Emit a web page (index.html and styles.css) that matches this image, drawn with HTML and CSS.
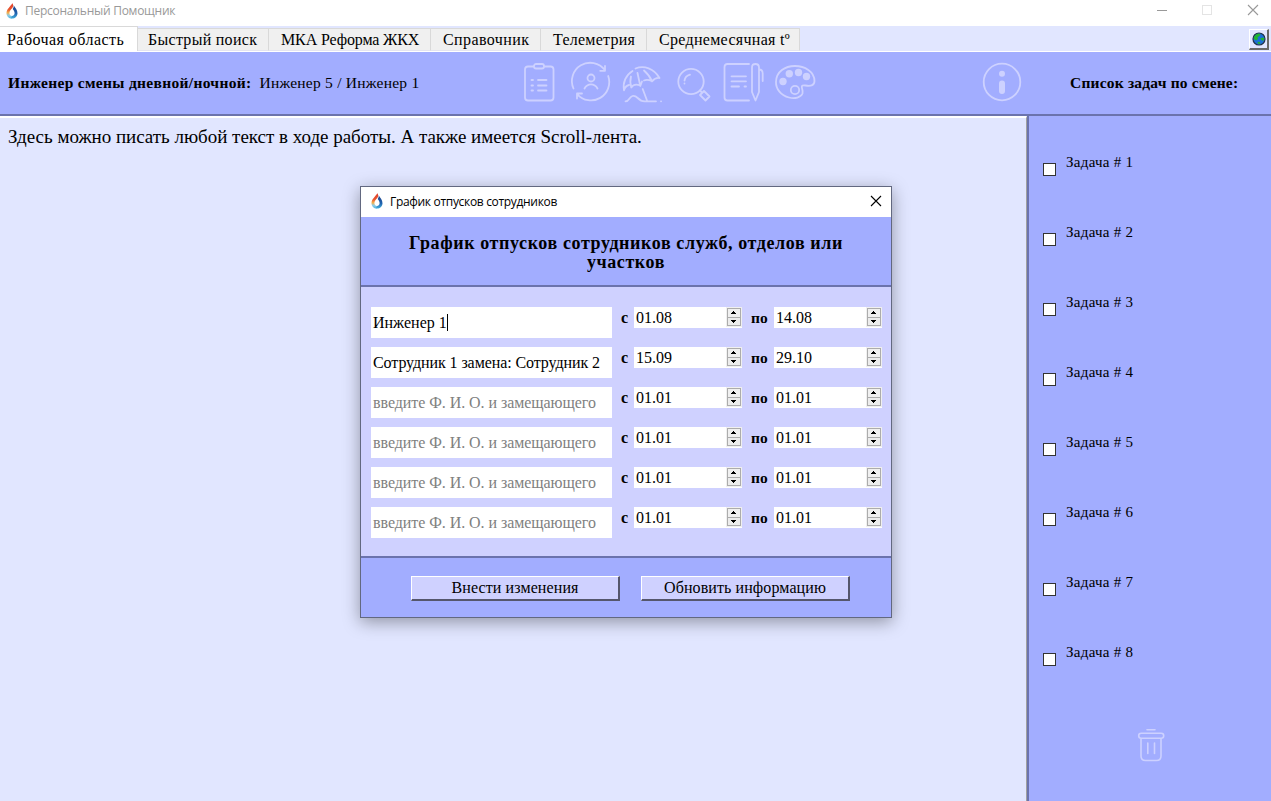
FILE: index.html
```
<!DOCTYPE html>
<html lang="ru">
<head>
<meta charset="utf-8">
<title>Персональный Помощник</title>
<link rel="stylesheet" href="styles.css">
</head>
<body>
<svg width="0" height="0" class="defs">
  <defs>
    <linearGradient id="warm" x1="0" y1="0" x2="0" y2="1"><stop offset="0" stop-color="#e2402c"/><stop offset=".4" stop-color="#e8552e"/><stop offset=".62" stop-color="#f5b04a"/><stop offset=".8" stop-color="#8ccbe6"/><stop offset="1" stop-color="#4fb4e0"/></linearGradient>
    <linearGradient id="cool" x1="0" y1="0" x2="0" y2="1"><stop offset="0" stop-color="#1c3f86"/><stop offset=".6" stop-color="#1f62ae"/><stop offset="1" stop-color="#45b0de"/></linearGradient>
    <symbol id="drop" viewBox="0 0 12 16">
      <path d="M6.300 .3C4.500 3.500 .5 6.200 .5 10.200c0 3 2.400 5.300 5.500 5.300v-2.600c-1.600 0-2.600-1.200-2.600-2.900C3.400 7.800 5.300 6.500 6.800 4.300 7.600 3 7.200 1.300 6.300 .3z" fill="url(#warm)"/>
      <path d="M7.600 2.300C9.400 5 11.500 7 11.500 10.200c0 3-2.400 5.300-5.500 5.300l-1-.2 1-2.400c1.600 0 2.600-1.200 2.600-2.900 0-1.600-.8-2.800-1.900-4.100.9-1.200 1.200-2.200.9-3.600z" fill="url(#cool)"/>
    </symbol>
    <symbol id="spin" viewBox="0 0 16 21">
      <rect width="16" height="20" fill="#f0f0f0"/>
      <rect x="1.500" y="1.500" width="13" height="9" fill="#f0f0f0" stroke="#acacac"/>
      <rect x="1.500" y="10.500" width="13" height="8" fill="#ececec" stroke="#acacac"/>
      <path d="M7 4h1v1h1v1h1v1H5V6h1V5h1zM5 13h5v1H9v1H8v1H7v-1H6v-1H5z" fill="#000"/>
    </symbol>
  </defs>
</svg>
<div class="window">
  <header class="titlebar">
    <svg class="logo" width="12" height="16"><use href="#drop"/></svg>
    <span class="app-name">Персональный Помощник</span>
    <svg class="controls" width="104" height="14" fill="none">
      <path d="M1 6.500h10" stroke="#999"/><rect x="46.500" y="1.500" width="9" height="9" stroke="#e4e4e4"/>
      <path d="M92 1l10 10M102 1L92 11" stroke="#999" stroke-width="1.100"/>
    </svg>
  </header>
  <nav class="tabs">
    <div class="tab active"><span class="t1">Рабочая область</span></div>
    <div class="tab w2"><span class="t2">Быстрый поиск</span></div>
    <div class="tab w3"><span class="t3">МКА Реформа ЖКХ</span></div>
    <div class="tab w4"><span class="t4">Справочник</span></div>
    <div class="tab w5"><span class="t5">Телеметрия</span></div>
    <div class="tab w6"><span class="t6">Среднемесячная tº</span></div>
    <button class="globe"><svg width="14" height="14" viewBox="0 0 14 14"><circle cx="7" cy="7" r="6" fill="#1b6fd8" stroke="#20324c" stroke-width="1.200"/><path d="M2 5l2-2.500L7 1.500l1.500 1L7 4.500 5.500 5 6 7 4 8.500 2 7zM8 6.500l3-1 1.500 1L11 9 9.500 8zM5 11l2-1.500 1.500 1.500-1 1.200z" fill="#1fb52c"/></svg></button>
  </nav>
  <section class="toolbar">
    <div class="shift"><b>Инженер смены дневной/ночной:</b><span>Инженер 5 / Инженер 1</span></div>
    <div class="icons">
      <svg width="42" height="42" class="ico"><rect x="7" y="5.500" width="28.500" height="34" rx="3"/><rect x="16" y="3" width="10" height="4.500" rx="2" class="cut"/><path d="M13.500 19h1.500M20 19h8.500M13.500 24.500h1.500M20 24.500h8.500M13.500 29.500h1.500M20 29.500h8.500"/></svg>
      <svg width="42" height="42" class="ico"><path d="M4.500 27.500A18.300 18.300 0 0 1 35.800 9M39.200 15A18.300 18.300 0 0 1 8.300 33.300M36 5v4.800h-4.800M8 37.500v-5h5"/><circle cx="22" cy="17" r="3.500"/><path d="M15.500 27.500c3-5.500 10-5.500 13 0"/></svg>
      <svg width="42" height="42" class="ico"><path d="M12.500 10C6 14 2.500 21.500 4 29.300c1-3 2.500-4.800 5-5.300M11 15.500c-1 3.500-.8 7 .3 11 2-3 4.500-3.500 8.200-2.300M17.500 12l2.800 13 1.700-4.500M15.500 7.500C24 4 34 7.500 39.500 17c-3-.5-5.500 1-7.500 3.300-3-1.500-5.500-1.800-8-.8M24 9.500c4 3.500 6.500 7 8 10.800M22.700 28l4.500 12M5.500 40.300c4 0 3-4 7-5.300 5-1.500 5 5.300 12 5.300h11.500M41 40.300h.1"/></svg>
      <svg width="42" height="42" class="ico"><circle cx="20" cy="20.500" r="12.700"/><path d="M13.500 19.500c.5-3 2.500-5 5.500-5.800M13.500 22.500v.1M29 29.500l1.500 1.500M29 34l4-4 5.500 5.500-4 4z"/></svg>
      <svg width="42" height="42" class="ico"><path d="M27 3H5.500Q2.500 3 2.500 6v30.500q0 3 3 3H27M9.500 15.300h14.500M9.500 20.300h14.500M9.500 25.500h7.500M22.500 25.500h1.500M30 6.500q0-3.500 3.500-3.500T37 6.500V31l-3.500 8.500L30 31zM37 8.500q3.700 0 3.700 4V20"/></svg>
      <svg width="42" height="42" class="ico"><path d="M29 25c-1 2 1.500 4 .5 7.500-1.500 4-7.500 5.500-13.500 4C8 34.500 2.800 28 3 21 3.300 10.500 12 5 22 5c9.500 0 19.500 5.500 19.500 15 0 5-4.500 5.200-9 4.500-1.500-.2-3-.3-3.500.5z"/><g class="solid"><circle cx="10" cy="20.500" r="3.700"/><circle cx="16.300" cy="12.800" r="3.700"/><circle cx="25.500" cy="11.500" r="3.700"/><circle cx="33.500" cy="15.500" r="3.700"/></g><circle cx="22" cy="29" r="4.200"/></svg>
    </div>
    <svg width="42" height="42" class="ico info"><circle cx="21" cy="21" r="18.300"/><circle cx="21" cy="12.700" r="3" class="solid"/><path d="M21 22.500v7.500" class="bar"/></svg>
    <b class="list-title">Список задач по смене:</b>
  </section>
  <main class="main">
    <div class="notes">Здесь можно писать любой текст в ходе работы. А также имеется Scroll-лента.</div>
    <aside class="tasks">
      <label class="task"><i class="box"></i><span>Задача # 1</span></label>
      <label class="task"><i class="box"></i><span>Задача # 2</span></label>
      <label class="task"><i class="box"></i><span>Задача # 3</span></label>
      <label class="task"><i class="box"></i><span>Задача # 4</span></label>
      <label class="task"><i class="box"></i><span>Задача # 5</span></label>
      <label class="task"><i class="box"></i><span>Задача # 6</span></label>
      <label class="task"><i class="box"></i><span>Задача # 7</span></label>
      <label class="task"><i class="box"></i><span>Задача # 8</span></label>
      <svg class="ico trash" width="28" height="36"><path d="M10 2.700h8M4 12v17q0 4.500 4.500 4.500h11q4.500 0 4.500-4.500V12M10.800 16v10.500M17.500 16v10.500"/><rect x="1.700" y="6.200" width="25" height="5" rx="2.500"/></svg>
    </aside>
  </main>
</div>
<div class="dialog">
  <div class="dlg-title">
    <svg class="logo" width="12" height="16"><use href="#drop"/></svg><span>График отпусков сотрудников</span>
    <svg class="close" width="12" height="12"><path d="M1 1l10 10M11 1L1 11" stroke="#000" stroke-width="1.100"/></svg>
  </div>
  <h1 class="dlg-head"><span class="h-first">График отпусков сотрудников служб, отделов или</span><span class="h-second">участков</span></h1>
  <div class="rows">
    <div class="row"><div class="field"><span class="f1">Инженер 1</span><i class="caret"></i></div><b class="from">с</b><div class="spin">01.08<svg width="16" height="21"><use href="#spin"/></svg></div><b class="to">по</b><div class="spin">14.08<svg width="16" height="21"><use href="#spin"/></svg></div></div>
    <div class="row"><div class="field"><span class="f2">Сотрудник 1 замена: Сотрудник 2</span></div><b class="from">с</b><div class="spin">15.09<svg width="16" height="21"><use href="#spin"/></svg></div><b class="to">по</b><div class="spin">29.10<svg width="16" height="21"><use href="#spin"/></svg></div></div>
    <div class="row"><div class="field hint"><span>введите Ф. И. О. и замещающего</span></div><b class="from">с</b><div class="spin">01.01<svg width="16" height="21"><use href="#spin"/></svg></div><b class="to">по</b><div class="spin">01.01<svg width="16" height="21"><use href="#spin"/></svg></div></div>
    <div class="row"><div class="field hint"><span>введите Ф. И. О. и замещающего</span></div><b class="from">с</b><div class="spin">01.01<svg width="16" height="21"><use href="#spin"/></svg></div><b class="to">по</b><div class="spin">01.01<svg width="16" height="21"><use href="#spin"/></svg></div></div>
    <div class="row"><div class="field hint"><span>введите Ф. И. О. и замещающего</span></div><b class="from">с</b><div class="spin">01.01<svg width="16" height="21"><use href="#spin"/></svg></div><b class="to">по</b><div class="spin">01.01<svg width="16" height="21"><use href="#spin"/></svg></div></div>
    <div class="row"><div class="field hint"><span>введите Ф. И. О. и замещающего</span></div><b class="from">с</b><div class="spin">01.01<svg width="16" height="21"><use href="#spin"/></svg></div><b class="to">по</b><div class="spin">01.01<svg width="16" height="21"><use href="#spin"/></svg></div></div>
  </div>
  <div class="dlg-foot"><button class="btn b1">Внести изменения</button><button class="btn b2">Обновить информацию</button></div>
</div>
</body>
</html>
```
FILE: styles.css
```
* { box-sizing: border-box; }
body { margin: 0; width: 1271px; height: 801px; overflow: hidden; font: 16px/20px "Liberation Serif", "Times New Roman", serif; color: #000; white-space: nowrap; }
svg { display: block; flex: none; }
.defs { position: absolute; }
button { font: inherit; color: inherit; }
.window { display: flex; flex-direction: column; height: 801px; background: #a2adff; }

.titlebar { display: flex; height: 26px; background: #fff; padding: 3px 11px 0 6px; font: 12px/16px "Open Sans", "Noto Sans", sans-serif; color: #999; }
.app-name { margin-left: 7px; letter-spacing: -.26px; }
.controls { margin: 1px 0 0 auto; }

.tabs { display: flex; align-items: flex-end; height: 26px; background: #e1e6ff; border-bottom: 1px solid #fff; }
.tab { height: 23px; padding-left: 10px; line-height: 22px; background: #f0f0f0; border-top: 1px solid #d9d9d9; border-right: 1px solid #d9d9d9; border-bottom: 1px solid #e4e4f0; }
.tab.active { width: 138px; height: 25px; padding-left: 7px; line-height: 25px; background: #fff; border-bottom: 0; }
.w2 { width: 131px; }
.w3 { width: 162px; padding-left: 12px; }
.w4 { width: 110px; padding-left: 12px; }
.w5 { width: 106px; padding-left: 12px; }
.w6 { width: 153px; padding-left: 12px; }
.t1 { letter-spacing: .45px; }
.t2 { letter-spacing: .28px; }
.t3 { letter-spacing: -.13px; }
.t4 { letter-spacing: .4px; }
.t5 { letter-spacing: .25px; }
.t6 { letter-spacing: .3px; }
.globe { margin: 0 2px 1px auto; width: 20px; height: 21px; padding: 2px; background: #e1e6ff; border: 1px solid #fff; border-right: 2px solid #696969; border-bottom: 2px solid #696969; }

.toolbar { display: flex; align-items: flex-start; height: 64px; border-bottom: 2px solid #6b73ad; }
.shift { display: flex; gap: 8px; width: 518px; padding: 21px 0 0 8px; font-size: 15.5px; letter-spacing: .24px; }
.shift b { letter-spacing: .32px; }
.icons { display: flex; gap: 9px; width: 463px; padding-top: 9px; }
.ico { fill: none; stroke: #cdd1ff; stroke-width: 1.8; stroke-linecap: round; stroke-linejoin: round; overflow: visible; }
.ico .cut { fill: #a2adff; }
.ico .solid { fill: #cdd1ff; stroke: none; }
.ico .bar { stroke-width: 6; }
.info { margin-top: 9px; }
.list-title { margin: 21px 0 0 47px; font-size: 15.5px; letter-spacing: .2px; }

.main { display: flex; flex: 1; }
.notes { width: 1027px; padding: 9px 0 0 8px; font-size: 19px; letter-spacing: -.015px; background: #e1e6ff; border-top: 2px solid #fff; border-right: 1px solid #a0a0a0; }
.tasks { flex: 1; border-left: 2px solid #6b73ad; padding: 36px 0 0 14px; font-size: 15px; letter-spacing: .28px; }
.task { display: flex; height: 70px; gap: 10px; }
.box { width: 13px; height: 13px; margin-top: 11px; background: #fff; border: 1px solid #333; }
.trash { margin: 15px 0 0 94px; stroke-width: 1.6; }

.dialog { position: absolute; left: 360px; top: 186px; width: 532px; height: 432px; border: 1px solid #626880; background: #cfd1ff; box-shadow: 0 4px 16px rgba(0, 0, 0, .36); }
.dlg-title { display: flex; height: 30px; padding: 6px 9px 0 10px; background: #fff; font: 12px/17px "Open Sans", "Noto Sans", sans-serif; }
.dlg-title span { margin-left: 7px; letter-spacing: -.32px; }
.close { margin: 2px 0 0 auto; }
.dlg-head { display: flex; flex-direction: column; align-items: center; margin: 0; height: 70px; padding-top: 17px; font-size: 18px; line-height: 19px; letter-spacing: .6px; background: #a2adff; border-bottom: 2px solid #6b73ad; }
.rows { height: 269px; padding: 20px 0 0 10px; }
.row { display: flex; height: 40px; }
.field { display: flex; width: 241px; height: 31px; padding: 6px 0 0 2px; background: #fff; }
.f2 { letter-spacing: -.09px; }
.hint { color: #808080; letter-spacing: -.06px; }
.caret { width: 1px; height: 17px; margin-top: 1px; background: #000; }
.from { width: 22px; padding: 1px 0 0 9px; }
.to { width: 32px; padding: 1px 0 0 9px; font-size: 15.5px; }
.spin { display: flex; justify-content: space-between; width: 108px; height: 21px; padding-left: 2px; line-height: 21px; background: #fff; }
.dlg-foot { display: flex; gap: 21px; height: 61px; padding: 18px 0 0 50px; background: #a2adff; border-top: 2px solid #6b73ad; }
.btn { width: 209px; height: 25px; padding: 0; line-height: 22px; letter-spacing: .1px; background: #cfd1ff; border: 1px solid #fff; border-right: 2px solid #55566c; border-bottom: 2px solid #55566c; }
```
